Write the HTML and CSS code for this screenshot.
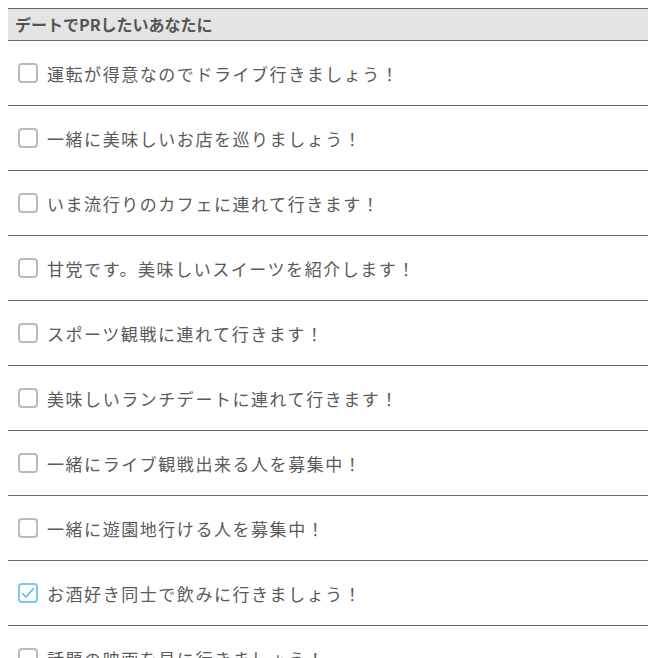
FILE: index.html
```html
<!DOCTYPE html>
<html lang="ja">
<head>
  <meta charset="UTF-8">
  <title>デートでPRしたいあなたに</title>
  <link rel="stylesheet" href="styles.css">
</head>
<body>
  <div class="group">
    <h2 class="group-title">デートでPRしたいあなたに</h2>
    <ul class="check-list">
      <li><label><span class="box"></span>運転が得意なのでドライブ行きましょう！</label></li>
      <li><label><span class="box"></span>一緒に美味しいお店を巡りましょう！</label></li>
      <li><label><span class="box"></span>いま流行りのカフェに連れて行きます！</label></li>
      <li><label><span class="box"></span>甘党です。美味しいスイーツを紹介します！</label></li>
      <li><label><span class="box"></span>スポーツ観戦に連れて行きます！</label></li>
      <li><label><span class="box"></span>美味しいランチデートに連れて行きます！</label></li>
      <li><label><span class="box"></span>一緒にライブ観戦出来る人を募集中！</label></li>
      <li><label><span class="box"></span>一緒に遊園地行ける人を募集中！</label></li>
      <li><label><span class="box checked"><svg width="14" height="12" viewBox="0 0 14 12"><path d="M1.5 6.5 L5 10 L12.5 1.5" fill="none" stroke="#5bb8f0" stroke-width="1.6" stroke-linecap="round" stroke-linejoin="round"/></svg></span>お酒好き同士で飲みに行きましょう！</label></li>
      <li><label><span class="box"></span>話題の映画を見に行きましょう！</label></li>
    </ul>
  </div>
</body>
</html>
```

FILE: styles.css
```css
body { margin: 8px; background: #fff; font-family: "Noto Sans CJK JP", "Noto Sans", sans-serif; color: #555; }
.group { border-top: 1px solid #666; }
.group-title { margin: 0; height: 31px; line-height: 30px; padding: 0 7px; font-size: 16px; font-weight: bold; background: #e4e4e4; color: #555; border-bottom: 1px solid #666; }
.check-list { list-style: none; margin: 0; padding: 0; }
.check-list li { height: 64px; border-bottom: 1px solid #666; }
.check-list label { display: flex; align-items: center; height: 64px; padding-left: 10px; font-size: 17px; letter-spacing: 1.55px; color: #5a5a5a; }
.box { width: 16px; height: 16px; border: 2px solid #bbb; border-radius: 4px; margin-right: 9px; display: flex; align-items: center; justify-content: center; flex: none; }
.box.checked { border-color: #7cc6f4; }
```
